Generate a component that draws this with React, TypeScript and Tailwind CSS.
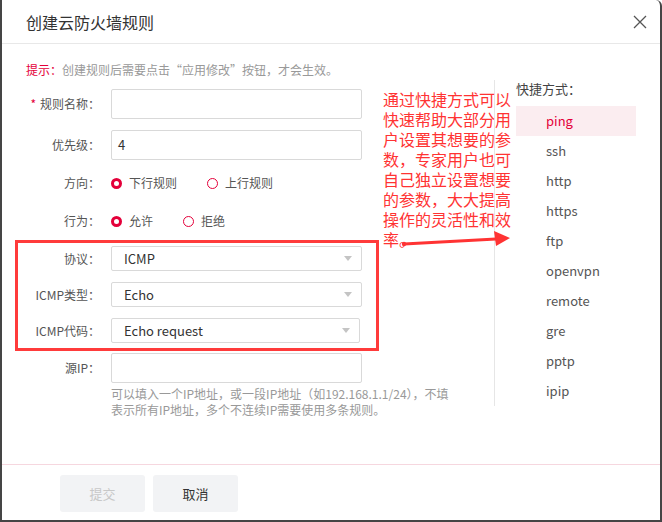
import React from 'react';

const RED = 'text-[#e4003a]';

const Radio: React.FC<{ checked?: boolean; label: string }> = ({ checked, label }) => (
    <div className="flex items-center gap-[7px]">
        <span
            className={
                checked
                    ? 'w-[11px] h-[11px] rounded-full border-[3px] border-[#e4003a] bg-white'
                    : 'w-[11px] h-[11px] rounded-full border-[1.5px] border-[#e4003a] bg-white'
            }
        />
        <span className="text-[12px] text-[#555]">{label}</span>
    </div>
);

const Label: React.FC<{ children: React.ReactNode }> = ({ children }) => (
    <div className="w-[98px] shrink-0 text-right text-[12px] text-[#555]">{children}</div>
);

const Select: React.FC<{ value: string; narrow?: boolean }> = ({ value, narrow }) => (
    <div
        className={
            (narrow ? 'w-[249px] ' : 'w-[251px] ') +
            'h-[25px] ml-[11px] border border-[#d9d9d9] rounded-[2px] flex items-center justify-between pl-[12px] pr-[9px] bg-white'
        }
    >
        <span className="text-[13px] text-[#333]">{value}</span>
        <svg width="8" height="5" viewBox="0 0 8 5">
            <path d="M0 0 L8 0 L4 5 Z" fill="#c4c4c4" />
        </svg>
    </div>
);

const quick = ['ping', 'ssh', 'http', 'https', 'ftp', 'openvpn', 'remote', 'gre', 'pptp', 'ipip'];

export default function App() {
    return (
        <div
            className="w-[662px] h-[522px] bg-white border-l-2 border-r-2 border-b-2 border-[#454545] rounded-tr-[6px] flex flex-col relative overflow-hidden"
            style={{ fontFamily: '"Noto Sans CJK SC", "Noto Sans", sans-serif' }}
        >
            {/* header */}
            <div className="h-[44px] shrink-0 border-b border-[#e8e8e8] flex items-center justify-between pl-[24px] pr-[13px]">
                <span className="text-[16px] text-[#333]">创建云防火墙规则</span>
                <svg width="14" height="14" viewBox="0 0 14 14">
                    <path d="M1 1 L13 13 M13 1 L1 13" stroke="#555" strokeWidth="1.3" />
                </svg>
            </div>

            {/* body */}
            <div className="flex-1 flex flex-col pt-[16px]">
                <div className="h-[20px] flex items-center pl-[24px] text-[12px]">
                    <span className={RED}>提示：</span>
                    <span className="text-[#999]">创建规则后需要点击“应用修改”按钮，才会生效。</span>
                </div>

                <div className="flex items-start">
                    {/* form */}
                    <div className="w-[492px] shrink-0 flex flex-col pt-[9px]">
                        <div className="flex items-center h-[30px]">
                            <Label>
                                <span className={RED + ' mr-[4px]'}>*</span>规则名称：
                            </Label>
                            <div className="w-[251px] h-[30px] ml-[11px] border border-[#d9d9d9] rounded-[2px]" />
                        </div>
                        <div className="flex items-center h-[30px] mt-[11px]">
                            <Label>优先级：</Label>
                            <div className="w-[251px] h-[30px] ml-[11px] border border-[#d9d9d9] rounded-[2px] flex items-center pl-[6px] text-[13px] text-[#333]">
                                4
                            </div>
                        </div>
                        <div className="flex items-center h-[30px] mt-[8px]">
                            <Label>方向：</Label>
                            <div className="ml-[11px] flex items-center gap-[30px]">
                                <Radio checked label="下行规则" />
                                <Radio label="上行规则" />
                            </div>
                        </div>
                        <div className="flex items-center h-[30px] mt-[8px]">
                            <Label>行为：</Label>
                            <div className="ml-[11px] flex items-center gap-[30px]">
                                <Radio checked label="允许" />
                                <Radio label="拒绝" />
                            </div>
                        </div>

                        <div className="relative mt-[4px] pt-[6px] pb-[8px] flex flex-col gap-[11px]">
                            <div className="flex items-center">
                                <Label>协议：</Label>
                                <Select value="ICMP" />
                            </div>
                            <div className="flex items-center">
                                <Label>ICMP类型：</Label>
                                <Select value="Echo" />
                            </div>
                            <div className="flex items-center">
                                <Label>ICMP代码：</Label>
                                <Select value="Echo request" narrow />
                            </div>
                            {/* annotation frame */}
                            <div className="absolute top-0 bottom-0 left-[13px] w-[364px] border-[3px] border-[#ff3b3b] pointer-events-none" />
                        </div>

                        <div className="flex items-center h-[30px] mt-[2px]">
                            <Label>源IP：</Label>
                            <div className="w-[251px] h-[30px] ml-[11px] border border-[#d9d9d9] rounded-[2px]" />
                        </div>
                        <div className="ml-[109px] mt-[3px] text-[12px] leading-[16px] text-[#999] whitespace-nowrap">
                            可以填入一个IP地址，或一段IP地址（如192.168.1.1/24），不填
                            <br />
                            表示所有IP地址，多个不连续IP需要使用多条规则。
                        </div>
                    </div>

                    {/* quick list */}
                    <div className="w-[166px] border-l border-[#e6e6e6] pl-[21px]">
                        <div className="h-[20px] leading-[18px] text-[13px] text-[#444]">快捷方式：</div>
                        <div className="mt-[6px] flex flex-col">
                            {quick.map((q, i) => (
                                <div
                                    key={q}
                                    className={
                                        i === 0
                                            ? 'w-[120px] h-[30px] flex items-center pl-[30px] text-[13px] bg-[#fbedf0] text-[#e4003a]'
                                            : 'w-[120px] h-[30px] flex items-center pl-[30px] text-[13px] text-[#555]'
                                    }
                                >
                                    {q}
                                </div>
                            ))}
                        </div>
                    </div>
                </div>
            </div>

            {/* footer */}
            <div className="h-[56px] shrink-0 border-t border-[#f6d7df] pt-[10px] pl-[58px] flex gap-[8px]">
                <button className="w-[85px] h-[37px] rounded-[3px] bg-[#f2f3f5] text-[13px] text-[#c8c8c8]">提交</button>
                <button className="w-[85px] h-[37px] rounded-[3px] bg-[#f2f3f5] text-[13px] text-[#333]">取消</button>
            </div>

            {/* red annotation overlay */}
            <div className="absolute left-[381px] top-[89px] w-[130px] text-[16px] leading-[20px] text-[#ff3333]">
                通过快捷方式可以快速帮助大部分用户设置其想要的参数，专家用户也可自己独立设置想要的参数，大大提高操作的灵活性和效率。
            </div>
            <svg className="absolute left-[398px] top-[228px]" width="114" height="22" viewBox="0 0 114 22">
                <circle cx="4" cy="16" r="2.2" fill="#ff3333" />
                <path d="M4 16 L96 11" stroke="#ff3333" strokeWidth="3" />
                <path d="M94 3 L110 10 L96 18 Z" fill="#ff3333" />
            </svg>
        </div>
    );
}
